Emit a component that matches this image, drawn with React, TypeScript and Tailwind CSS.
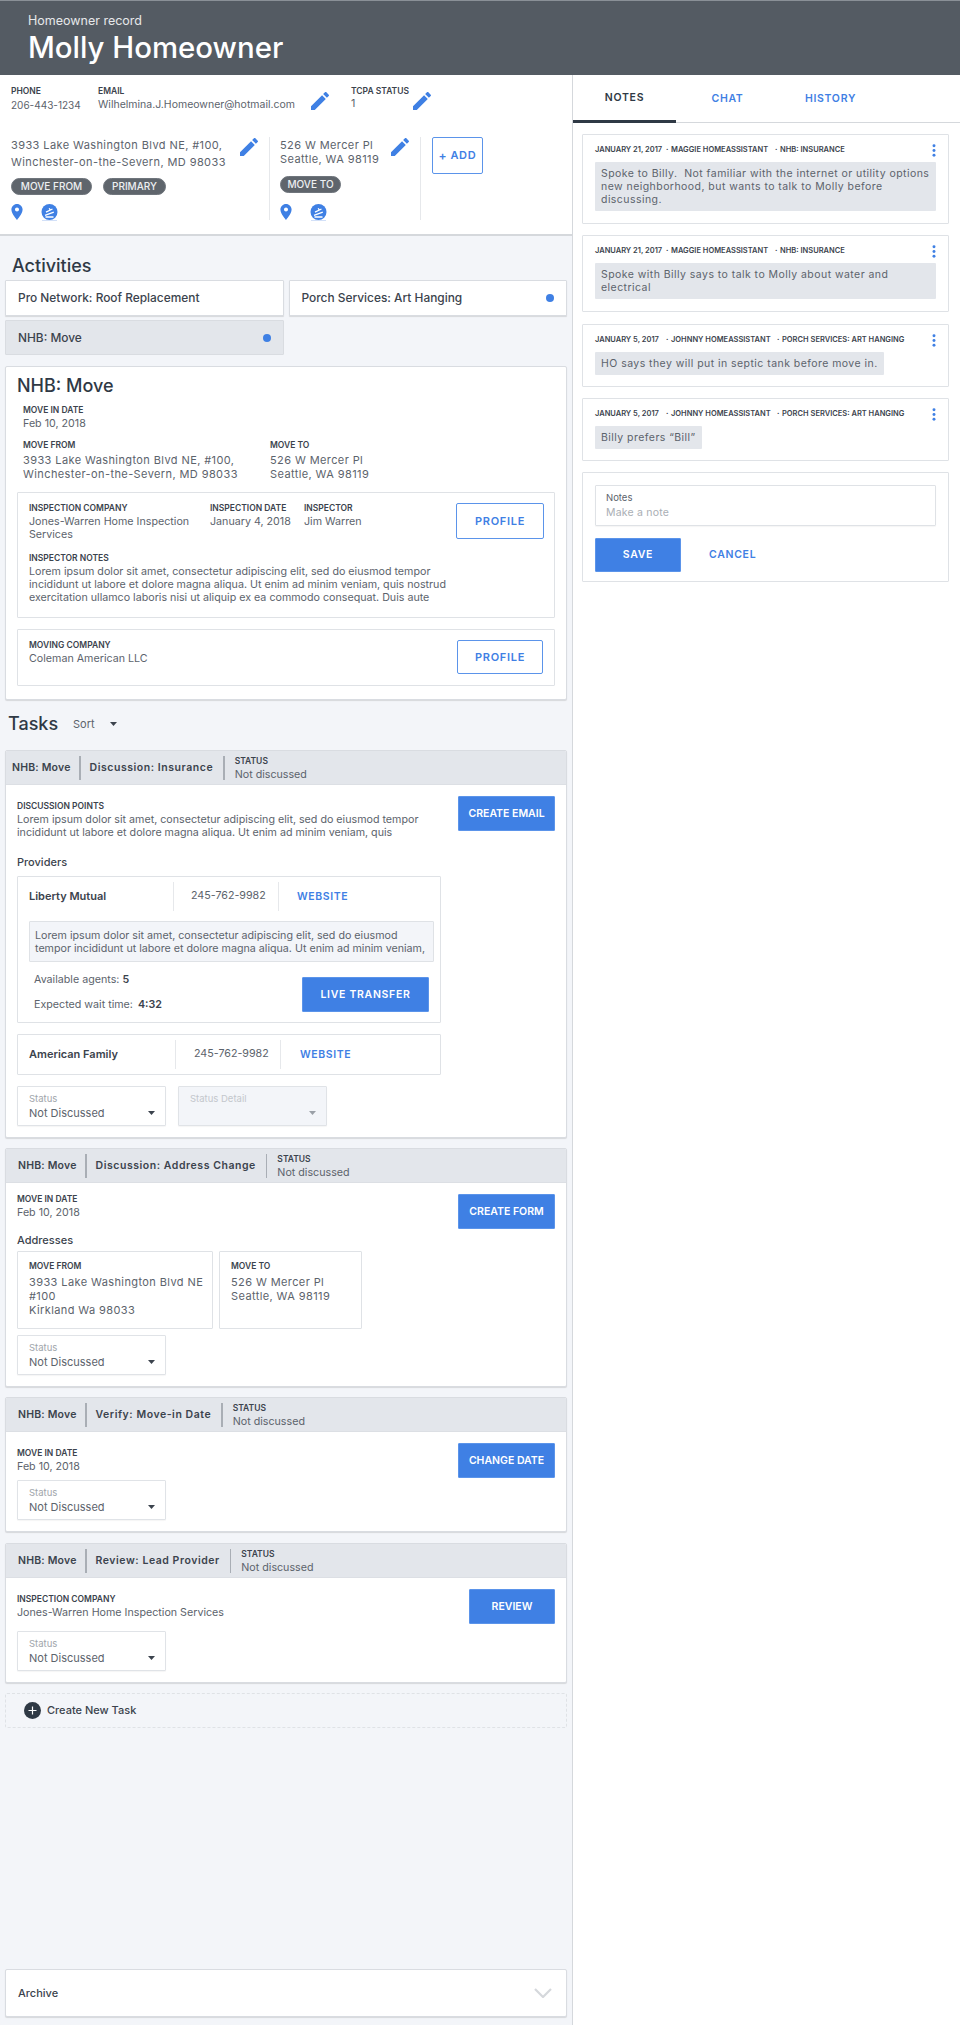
import type { ReactNode } from "react";

const labelCls = "text-[8.5px] font-semibold uppercase leading-[14px] text-[#3b434d] whitespace-nowrap";
const valueCls = "text-[10.7px] leading-[14px] text-[#5c636c] whitespace-nowrap";
const paraCls = "text-[10.7px] leading-[13px] text-[#5c636c] whitespace-nowrap";
const addrCls = "text-[11px] tracking-[0.4px] text-[#5c636c] whitespace-nowrap";
const solidBtn =
  "flex items-center justify-center bg-[#3f80e4] border border-[#5b94ea] text-white text-[10.5px] font-semibold rounded-[1px] whitespace-nowrap";
const outlineBtn =
  "flex items-center justify-center bg-white border border-[#5b94ea] text-[#3f80e4] text-[11px] font-semibold tracking-[0.7px] rounded-[2px]";

function Pencil() {
  return (
    <svg viewBox="3 3 18 18" className="w-[18px] h-[18px] shrink-0 fill-[#3f80e4]">
      <path d="M3 17.25V21h3.75L17.81 9.94l-3.75-3.75L3 17.25zM20.71 7.04c.39-.39.39-1.02 0-1.41l-2.34-2.34c-.39-.39-1.02-.39-1.41 0l-1.83 1.83 3.75 3.75 1.83-1.83z" />
    </svg>
  );
}

function MapIcons() {
  return (
    <div className="flex items-start gap-[18px]">
      <svg viewBox="5 2 14 20" className="w-[12px] h-[16px] fill-[#3f80e4]">
        <path d="M12 2C8.13 2 5 5.13 5 9c0 5.25 7 13 7 13s7-7.75 7-13c0-3.87-3.13-7-7-7zm0 9.5c-1.38 0-2.5-1.12-2.5-2.5s1.12-2.5 2.5-2.5 2.5 1.12 2.5 2.5-1.12 2.5-2.5 2.5z" />
      </svg>
      <svg viewBox="0 0 17 17" className="w-[17px] h-[17px]">
        <circle cx="8.5" cy="8" r="8" fill="#3f80e4" />
        <path d="M5 8.2 11.5 5M8.2 4.2 9.4 6.4M4 11.4 12.8 8.2M4.5 13h8" stroke="#fff" strokeWidth="1.3" fill="none" />
        <path d="M1 16.6h15" stroke="#b9cff3" strokeWidth="0.7" />
      </svg>
    </div>
  );
}

function Chip({ width, children }: { width: string; children: ReactNode }) {
  return (
    <span className={"flex h-[17px] items-center justify-center rounded-full bg-[#5f656c] border border-[#6f757c] text-[10px] font-medium text-[#eef0f2] whitespace-nowrap " + width}>
      {children}
    </span>
  );
}

function Caret({ color = "#3b434d" }: { color?: string }) {
  return (
    <svg viewBox="0 0 7 4" className="w-[7px] h-[4px]">
      <path d="M0 0h7L3.5 4z" fill={color} />
    </svg>
  );
}

function Select({ label, value, disabled }: { label: string; value?: string; disabled?: boolean }) {
  return (
    <div
      className={
        "flex h-[40px] w-[149px] justify-between rounded-[1px] border border-[#e0e3e7] pl-[11px] pr-[10px] pt-[6px] shadow-[0_1px_1px_rgba(0,0,0,0.04)] " +
        (disabled ? "bg-[#f3f5f9]" : "bg-white")
      }
    >
      <div>
        <div className={"text-[9.5px] leading-[12px] " + (disabled ? "text-[#c3c7cc]" : "text-[#a0a5ab]")}>{label}</div>
        <div className="mt-[1px] text-[11px] leading-[14px] text-[#5c636c] whitespace-nowrap">{value}</div>
      </div>
      <div className="mt-[18px]">
        <Caret color={disabled ? "#9aa0a7" : "#3b434d"} />
      </div>
    </div>
  );
}

function TaskHeader({ pad, type }: { pad: string; type: string }) {
  return (
    <div className={"flex h-[34px] items-center bg-[#e3e6eb] border-b border-[#dcdfe4] " + pad}>
      <span className="w-[58px] text-[10.5px] font-semibold tracking-[0.2px] text-[#3b434d] whitespace-nowrap">NHB: Move</span>
      <span className="ml-[9px] h-[24px] w-[1.5px] bg-[#a9aeb5]" />
      <span className="ml-[9px] text-[10.5px] font-semibold tracking-[0.55px] text-[#3b434d] whitespace-nowrap">{type}</span>
      <span className="ml-[10px] h-[24px] w-[1.5px] bg-[#a9aeb5]" />
      <div className="ml-[10px]">
        <div className={labelCls}>Status</div>
        <div className={valueCls}>Not discussed</div>
      </div>
    </div>
  );
}

function TaskCard({
  className,
  pad,
  type,
  leftClass,
  button,
  buttonClass,
  children,
}: {
  className: string;
  pad: string;
  type: string;
  leftClass: string;
  button: string;
  buttonClass: string;
  children: ReactNode;
}) {
  return (
    <div className={"overflow-hidden rounded-[2px] border border-[#d9dce1] bg-white shadow-[0_1px_1px_rgba(0,0,0,0.12)] " + className}>
      <TaskHeader pad={pad} type={type} />
      <div className="flex items-start justify-between px-[11px] pt-[9px] pb-[11px]">
        <div className={leftClass}>{children}</div>
        <button className={solidBtn + " h-[35px] shrink-0 " + buttonClass}>{button}</button>
      </div>
    </div>
  );
}

function ProviderRow({ name, nameW, phoneW, phonePad, webPad }: { name: string; nameW: string; phoneW: string; phonePad: string; webPad: string }) {
  return (
    <div className="flex h-[29px] items-center pl-[11px]">
      <span className={"text-[11px] font-semibold text-[#3b434d] whitespace-nowrap " + nameW}>{name}</span>
      <span className={"flex h-full items-center border-l border-[#e6e8eb] text-[10.7px] text-[#5c636c] whitespace-nowrap " + phoneW + " " + phonePad}>245-762-9982</span>
      <span className={"flex h-full items-center border-l border-[#e6e8eb] text-[10.5px] font-semibold tracking-[0.6px] text-[#3f80e4] " + webPad}>WEBSITE</span>
    </div>
  );
}

function Note({ className, meta, widths, boxClass, children }: { className: string; meta: string[]; widths: string[]; boxClass: string; children: ReactNode }) {
  return (
    <div className={"rounded-[1px] border border-[#dfe2e6] bg-white px-[12px] pt-[9px] " + className}>
      <div className="flex h-[12px] items-center justify-between">
        <div className="flex items-center text-[7.5px] font-semibold uppercase text-[#3b434d] whitespace-nowrap">
          <span className={widths[0]}>{meta[0]}</span>
          <span className="w-[5px]">·</span>
          <span className={widths[1]}>{meta[1]}</span>
          <span className="w-[5px]">·</span>
          <span>{meta[2]}</span>
        </div>
        <svg viewBox="0 0 4 14" className="w-[4px] h-[13px] fill-[#3f80e4]">
          <circle cx="2" cy="2" r="1.6" />
          <circle cx="2" cy="7" r="1.6" />
          <circle cx="2" cy="12" r="1.6" />
        </svg>
      </div>
      <div className={"mt-[6px] rounded-[1px] bg-[#e3e6eb] px-[6px] py-[5px] text-[10.5px] leading-[13px] tracking-[0.45px] text-[#5c636c] whitespace-nowrap " + boxClass}>
        {children}
      </div>
    </div>
  );
}

export default function App() {
  return (
    <div className="flex h-[2025px] w-[960px] flex-col bg-white font-['Inter',sans-serif]">
      <header className="h-[75px] shrink-0 border-t border-[#8a9097] bg-[#545b63] pl-[28px] pt-[11px]">
        <div className="text-[12.5px] leading-[18px] text-[#e6e8ea]">Homeowner record</div>
        <div className="text-[29.4px] font-medium leading-[35px] text-white">Molly Homeowner</div>
      </header>

      <div className="flex flex-1">
        {/* left column */}
        <div className="flex w-[572px] shrink-0 flex-col bg-[#f3f5f9]">
          <section className="h-[161px] border-b-2 border-[#d5d8dc] bg-white pl-[11px] pt-[9px]">
            <div className="flex items-start">
              <div className="w-[87px]">
                <div className={labelCls}>Phone</div>
                <div className="text-[10px] leading-[14px] text-[#5c636c]">206-443-1234</div>
              </div>
              <div className="w-[213px]">
                <div className={labelCls}>Email</div>
                <div className="text-[10.5px] leading-[14px] text-[#5c636c]">Wilhelmina.J.Homeowner@hotmail.com</div>
              </div>
              <div className="mt-[8px]"><Pencil /></div>
              <div className="ml-[22px] w-[62px]">
                <div className={labelCls}>TCPA Status</div>
                <div className={valueCls + " -mt-[1px]"}>1</div>
              </div>
              <div className="mt-[8px]"><Pencil /></div>
            </div>

            <div className="mt-[25px] flex h-[83px]">
              <div className="w-[258px]">
                <div className="flex">
                  <div className={"w-[229px] leading-[17px] " + addrCls}>
                    3933 Lake Washington Blvd NE, #100,
                    <br />
                    Winchester-on-the-Severn, MD 98033
                  </div>
                  <div className="mt-[1px]"><Pencil /></div>
                </div>
                <div className="mt-[7px] flex gap-[11px]">
                  <Chip width="w-[81px]">MOVE FROM</Chip>
                  <Chip width="w-[63px]">PRIMARY</Chip>
                </div>
                <div className="mt-[9px]"><MapIcons /></div>
              </div>
              <div className="w-[151px] border-l border-[#e6e8eb] pl-[10px]">
                <div className="flex pt-[1px]">
                  <div className={"w-[111px] leading-[14px] " + addrCls}>
                    526 W Mercer Pl
                    <br />
                    Seattle, WA 98119
                  </div>
                  <Pencil />
                </div>
                <div className="mt-[10px] flex"><Chip width="w-[61px]">MOVE TO</Chip></div>
                <div className="mt-[11px]"><MapIcons /></div>
              </div>
              <div className="border-l border-[#e6e8eb] pl-[11px]">
                <button className={outlineBtn + " h-[37px] w-[51px]"}>
                  <span className="mr-[3px] text-[12px] leading-none">+</span>ADD
                </button>
              </div>
            </div>
          </section>

          <h2 className="mt-[18px] pl-[12px] text-[18px] font-medium leading-[24px] text-[#2f3945]">Activities</h2>

          <div className="mt-[2px] grid grid-cols-2 gap-x-[5px] gap-y-[4px] px-[5px]">
            <div className="flex h-[36px] items-center rounded-[1px] border border-[#d9dce1] bg-white pl-[12px] text-[11.9px] font-medium text-[#3b434d] shadow-[0_1px_1px_rgba(0,0,0,0.12)]">
              Pro Network: Roof Replacement
            </div>
            <div className="flex h-[36px] items-center justify-between rounded-[1px] border border-[#d9dce1] bg-white pl-[12px] pr-[12px] text-[11.9px] font-medium text-[#3b434d] shadow-[0_1px_1px_rgba(0,0,0,0.12)]">
              Porch Services: Art Hanging
              <span className="h-[8px] w-[8px] rounded-full bg-[#3f80e4]" />
            </div>
            <div className="flex h-[35px] items-center justify-between rounded-[1px] border border-[#d9dce1] bg-[#e3e6eb] pl-[12px] pr-[12px] text-[11.9px] font-medium text-[#3b434d]">
              NHB: Move
              <span className="h-[8px] w-[8px] rounded-full bg-[#3f80e4]" />
            </div>
          </div>

          {/* activity detail */}
          <div className="mx-[5px] mt-[11px] h-[334px] rounded-[2px] border border-[#d9dce1] bg-white pt-[7px] shadow-[0_1px_1px_rgba(0,0,0,0.12)]">
            <h3 className="pl-[11px] text-[18px] font-medium leading-[24px] text-[#2f3945]">NHB: Move</h3>
            <div className="mt-[5px] pl-[17px]">
              <div className={labelCls}>Move in date</div>
              <div className={valueCls}>Feb 10, 2018</div>
              <div className="mt-[7px] flex">
                <div className="w-[247px]">
                  <div className={labelCls}>Move from</div>
                  <div className={"mt-[1px] leading-[14px] " + addrCls}>
                    3933 Lake Washington Blvd NE, #100,
                    <br />
                    Winchester-on-the-Severn, MD 98033
                  </div>
                </div>
                <div>
                  <div className={labelCls}>Move to</div>
                  <div className={"mt-[1px] leading-[14px] " + addrCls}>
                    526 W Mercer Pl
                    <br />
                    Seattle, WA 98119
                  </div>
                </div>
              </div>
            </div>

            <div className="mx-[11px] mt-[11px] h-[126px] rounded-[1px] border border-[#dfe2e6] pl-[11px] pr-[10px] pt-[8px]">
              <div className="flex h-[41px] items-start">
                <div className="w-[181px]">
                  <div className={labelCls}>Inspection company</div>
                  <div className={paraCls}>
                    Jones-Warren Home Inspection
                    <br />
                    Services
                  </div>
                </div>
                <div className="w-[94px]">
                  <div className={labelCls}>Inspection date</div>
                  <div className={paraCls}>January 4, 2018</div>
                </div>
                <div className="flex-1">
                  <div className={labelCls}>Inspector</div>
                  <div className={paraCls}>Jim Warren</div>
                </div>
                <button className={outlineBtn + " mt-[2px] h-[36px] w-[88px]"}>PROFILE</button>
              </div>
              <div className="mt-[9px]">
                <div className={labelCls}>Inspector notes</div>
                <div className={paraCls}>
                  Lorem ipsum dolor sit amet, consectetur adipiscing elit, sed do eiusmod tempor
                  <br />
                  incididunt ut labore et dolore magna aliqua. Ut enim ad minim veniam, quis nostrud
                  <br />
                  exercitation ullamco laboris nisi ut aliquip ex ea commodo consequat. Duis aute
                </div>
              </div>
            </div>

            <div className="mx-[11px] mt-[11px] flex h-[57px] items-start justify-between rounded-[1px] border border-[#dfe2e6] pl-[11px] pr-[11px] pt-[8px]">
              <div>
                <div className={labelCls}>Moving company</div>
                <div className={valueCls}>Coleman American LLC</div>
              </div>
              <button className={outlineBtn + " mt-[2px] h-[34px] w-[86px]"}>PROFILE</button>
            </div>
          </div>

          <div className="mt-[12px] flex h-[24px] items-center pl-[8px]">
            <h2 className="w-[65px] text-[18px] font-medium leading-[24px] text-[#2f3945]">Tasks</h2>
            <span className="w-[37px] text-[11px] text-[#5c636c]">Sort</span>
            <Caret />
          </div>

          {/* tasks */}
          <div className="mt-[14px] flex flex-col px-[5px]">
            <TaskCard
              className=""
              pad="pl-[6px]"
              type="Discussion: Insurance"
              leftClass="mt-[5px] w-[424px]"
              button="CREATE EMAIL"
              buttonClass="mt-[2px] w-[97px]"
            >
              <div className={labelCls}>Discussion points</div>
              <div className={paraCls}>
                Lorem ipsum dolor sit amet, consectetur adipiscing elit, sed do eiusmod tempor
                <br />
                incididunt ut labore et dolore magna aliqua. Ut enim ad minim veniam, quis
              </div>
              <div className="mt-[16px] text-[11px] font-medium leading-[14px] text-[#3b434d]">Providers</div>
              <div className="mt-[7px] h-[147px] rounded-[1px] border border-[#dfe2e6] pt-[5px]">
                <ProviderRow name="Liberty Mutual" nameW="w-[144px]" phoneW="w-[105px]" phonePad="pl-[17px]" webPad="pl-[18px]" />
                <div className="ml-[11px] mt-[10px] flex h-[41px] w-[405px] items-center rounded-[1px] border border-[#dfe2e6] bg-[#f3f5f9] pl-[5px]">
                  <div className={paraCls}>
                    Lorem ipsum dolor sit amet, consectetur adipiscing elit, sed do eiusmod
                    <br />
                    tempor incididunt ut labore et dolore magna aliqua. Ut enim ad minim veniam,
                  </div>
                </div>
                <div className="mt-[11px] flex items-start justify-between pl-[16px] pr-[11px]">
                  <div>
                    <div className={valueCls}>
                      Available agents: <b className="font-semibold text-[#3b434d]">5</b>
                    </div>
                    <div className={valueCls + " mt-[11px]"}>
                      Expected wait time: <b className="ml-[2px] font-semibold text-[#3b434d]">4:32</b>
                    </div>
                  </div>
                  <button className={solidBtn + " mt-[4px] h-[35px] w-[127px] tracking-[0.7px]"}>LIVE TRANSFER</button>
                </div>
              </div>
              <div className="mt-[11px] flex h-[41px] items-center rounded-[1px] border border-[#dfe2e6]">
                <ProviderRow name="American Family" nameW="w-[146px]" phoneW="w-[105px]" phonePad="pl-[18px]" webPad="pl-[19px]" />
              </div>
              <div className="mt-[11px] flex gap-[12px]">
                <Select label="Status" value="Not Discussed" />
                <Select label="Status Detail" disabled />
              </div>
            </TaskCard>

            <TaskCard
              className="mt-[10px]"
              pad="pl-[12px]"
              type="Discussion: Address Change"
              leftClass=""
              button="CREATE FORM"
              buttonClass="mt-[2px] w-[97px]"
            >
              <div className={labelCls}>Move in date</div>
              <div className={valueCls}>Feb 10, 2018</div>
              <div className="mt-[13px] text-[11px] font-medium leading-[14px] text-[#3b434d]">Addresses</div>
              <div className="mt-[4px] flex gap-[6px]">
                <div className="h-[78px] w-[196px] rounded-[1px] border border-[#dfe2e6] pl-[11px] pt-[7px]">
                  <div className={labelCls}>Move from</div>
                  <div className={"mt-[2px] leading-[14px] " + addrCls}>
                    3933 Lake Washington Blvd NE
                    <br />
                    #100
                    <br />
                    Kirkland Wa 98033
                  </div>
                </div>
                <div className="h-[78px] w-[143px] rounded-[1px] border border-[#dfe2e6] pl-[11px] pt-[7px]">
                  <div className={labelCls}>Move to</div>
                  <div className={"mt-[2px] leading-[14px] " + addrCls}>
                    526 W Mercer Pl
                    <br />
                    Seattle, WA 98119
                  </div>
                </div>
              </div>
              <div className="mt-[6px]"><Select label="Status" value="Not Discussed" /></div>
            </TaskCard>

            <TaskCard
              className="mt-[10px]"
              pad="pl-[12px]"
              type="Verify: Move-in Date"
              leftClass="mt-[5px]"
              button="CHANGE DATE"
              buttonClass="mt-[2px] w-[97px]"
            >
              <div className={labelCls}>Move in date</div>
              <div className={valueCls}>Feb 10, 2018</div>
              <div className="mt-[6px]"><Select label="Status" value="Not Discussed" /></div>
            </TaskCard>

            <TaskCard
              className="mt-[11px]"
              pad="pl-[12px]"
              type="Review: Lead Provider"
              leftClass="mt-[5px]"
              button="REVIEW"
              buttonClass="mt-[2px] w-[86px]"
            >
              <div className={labelCls}>Inspection company</div>
              <div className={valueCls}>Jones-Warren Home Inspection Services</div>
              <div className="mt-[11px]"><Select label="Status" value="Not Discussed" /></div>
            </TaskCard>

            <div className="mt-[10px] flex h-[35px] items-center rounded-[2px] border border-dashed border-[#dfe2e6] pl-[18px]">
              <svg viewBox="0 0 17 17" className="h-[17px] w-[17px]">
                <circle cx="8.5" cy="8.5" r="8.5" fill="#2f3945" />
                <path d="M8.5 4.5v8M4.5 8.5h8" stroke="#fff" strokeWidth="1.2" />
              </svg>
              <span className="ml-[6px] text-[11px] font-medium text-[#3b434d]">Create New Task</span>
            </div>
          </div>

          <div className="mx-[5px] mb-[8px] mt-auto flex h-[48px] items-center justify-between rounded-[2px] border border-[#d9dce1] bg-white pl-[12px] pr-[14px] shadow-[0_1px_1px_rgba(0,0,0,0.12)]">
            <span className="text-[11px] font-medium text-[#3b434d]">Archive</span>
            <svg viewBox="0 0 18 10" className="h-[10px] w-[18px]">
              <path d="M1 1l8 8 8-8" fill="none" stroke="#d5d8dc" strokeWidth="2.2" />
            </svg>
          </div>
        </div>

        {/* right column */}
        <aside className="flex-1 border-l border-[#d5d8dc] bg-white">
          <div className="flex h-[48px] border-b border-[#d5d8dc]">
            <div className="flex h-[48px] w-[103px] items-center justify-center border-b-[3px] border-[#2f3945] text-[10.5px] font-semibold tracking-[0.7px] text-[#2f3945]">NOTES</div>
            <div className="flex h-[48px] w-[103px] items-center justify-center text-[10.5px] font-semibold tracking-[0.7px] text-[#3f80e4]">CHAT</div>
            <div className="flex h-[48px] w-[103px] items-center justify-center text-[10.5px] font-semibold tracking-[0.7px] text-[#3f80e4]">HISTORY</div>
          </div>

          <div className="ml-[9px] w-[367px]">
            <Note
              className="mt-[11px] pb-[12px]"
              meta={["January 21, 2017", "Maggie Homeassistant", "NHB: Insurance"]}
              widths={["w-[71px]", "w-[104px]"]}
              boxClass=""
            >
              Spoke to Billy.&nbsp; Not familiar with the internet or utility options
              <br />
              new neighborhood, but wants to talk to Molly before
              <br />
              discussing.
            </Note>
            <Note
              className="mt-[11px] pb-[12px]"
              meta={["January 21, 2017", "Maggie Homeassistant", "NHB: Insurance"]}
              widths={["w-[71px]", "w-[104px]"]}
              boxClass=""
            >
              Spoke with Billy says to talk to Molly about water and
              <br />
              electrical
            </Note>
            <Note
              className="mt-[12px] pb-[11px]"
              meta={["January 5, 2017", "Johnny Homeassistant", "Porch Services: Art Hanging"]}
              widths={["w-[71px]", "w-[106px]"]}
              boxClass="w-fit"
            >
              HO says they will put in septic tank before move in.
            </Note>
            <Note
              className="mt-[11px] pb-[11px]"
              meta={["January 5, 2017", "Johnny Homeassistant", "Porch Services: Art Hanging"]}
              widths={["w-[71px]", "w-[106px]"]}
              boxClass="w-fit"
            >
              Billy prefers “Bill”
            </Note>

            <div className="mt-[11px] h-[110px] rounded-[1px] border border-[#dfe2e6] px-[12px] pt-[12px]">
              <div className="h-[41px] rounded-[1px] border border-[#dfe2e6] pl-[10px] pt-[5px] shadow-[0_1px_1px_rgba(0,0,0,0.04)]">
                <div className="text-[9.5px] leading-[13px] text-[#5c636c]">Notes</div>
                <div className="mt-[2px] text-[10.5px] leading-[14px] tracking-[0.2px] text-[#a9aeb4]">Make a note</div>
              </div>
              <div className="mt-[12px] flex items-center">
                <button className={solidBtn + " h-[34px] w-[86px] tracking-[0.7px]"}>SAVE</button>
                <span className="ml-[28px] text-[10.5px] font-semibold tracking-[0.7px] text-[#3f80e4]">CANCEL</span>
              </div>
            </div>
          </div>
        </aside>
      </div>
    </div>
  );
}
